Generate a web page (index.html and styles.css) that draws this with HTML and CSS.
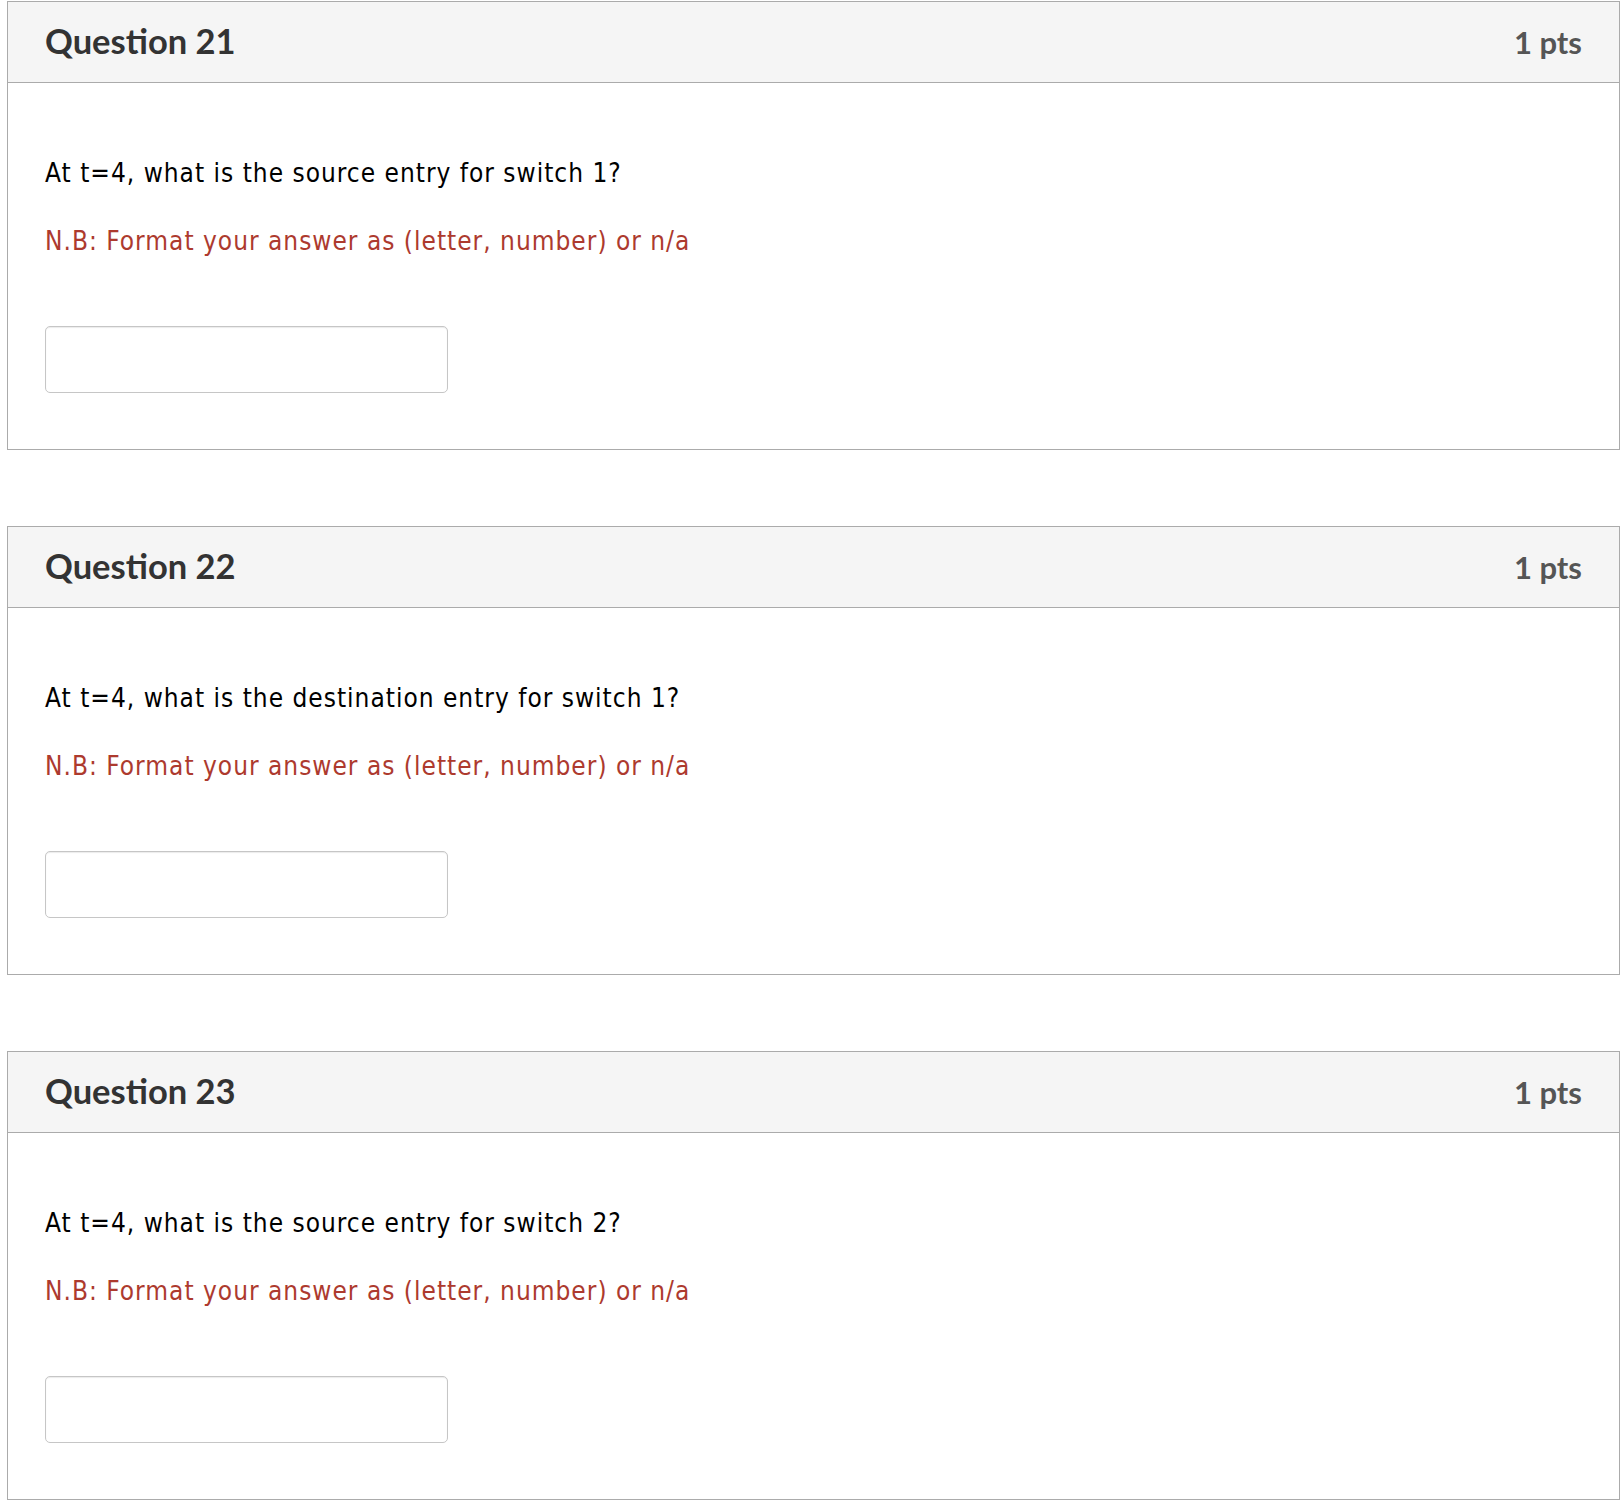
FILE: index.html
```html
<!DOCTYPE html>
<html lang="en">
<head>
<meta charset="utf-8">
<title>Quiz</title>
<link rel="stylesheet" href="styles.css">
</head>
<body>
<div class="quiz">
  <div class="question">
    <div class="q-header">
      <span class="q-title">Question 21</span>
      <span class="q-pts">1 pts</span>
    </div>
    <div class="q-body">
      <p class="q-text">At t=4, what is the source entry for switch 1?</p>
      <p class="q-note">N.B: Format your answer as (letter, number) or n/a</p>
      <input class="q-input" type="text" aria-label="Answer 21">
    </div>
  </div>
  <div class="question">
    <div class="q-header">
      <span class="q-title">Question 22</span>
      <span class="q-pts">1 pts</span>
    </div>
    <div class="q-body">
      <p class="q-text">At t=4, what is the destination entry for switch 1?</p>
      <p class="q-note">N.B: Format your answer as (letter, number) or n/a</p>
      <input class="q-input" type="text" aria-label="Answer 22">
    </div>
  </div>
  <div class="question">
    <div class="q-header">
      <span class="q-title">Question 23</span>
      <span class="q-pts">1 pts</span>
    </div>
    <div class="q-body">
      <p class="q-text">At t=4, what is the source entry for switch 2?</p>
      <p class="q-note">N.B: Format your answer as (letter, number) or n/a</p>
      <input class="q-input" type="text" aria-label="Answer 23">
    </div>
  </div>
</div>
</body>
</html>
```

FILE: styles.css
```css
html, body {
  margin: 0;
  padding: 0;
  background: #fff;
}

.quiz {
  display: flex;
  flex-direction: column;
  gap: 76px;
  width: 1613px;
  margin: 1px 0 0 7px;
}

.question {
  border: 1px solid #ababab;
  background: #fff;
}

.q-header {
  display: flex;
  justify-content: space-between;
  align-items: baseline;
  height: 81px;
  box-sizing: border-box;
  padding: 21px 37px 0 37px;
  background: #f5f5f5;
  border-bottom: 1px solid #ababab;
  font-family: Lato, "Open Sans", sans-serif;
  font-weight: 700;
}

.q-title {
  font-size: 34.5px;
  line-height: 36px;
  color: #333;
}

.q-pts {
  font-size: 31px;
  line-height: 36px;
  color: #555;
}

.q-body {
  display: flex;
  flex-direction: column;
  align-items: flex-start;
  padding: 71px 37px 56px 37px;
  font-family: "DejaVu Sans Condensed", "DejaVu Sans", sans-serif;
  font-size: 26px;
  line-height: 39px;
  letter-spacing: 1px;
}

.q-text {
  margin: 0;
  color: #000;
}

.q-note {
  margin: 29px 0 0 0;
  color: #ad3a2e;
}

.q-input {
  margin: 65px 0 0 0;
  width: 403px;
  height: 67px;
  box-sizing: border-box;
  border: 1px solid #c6c6c6;
  border-radius: 5px;
  box-shadow: inset 0 1px 1px rgba(0, 0, 0, 0.08);
  background: #fff;
  padding: 0 12px;
  font: inherit;
}
```
